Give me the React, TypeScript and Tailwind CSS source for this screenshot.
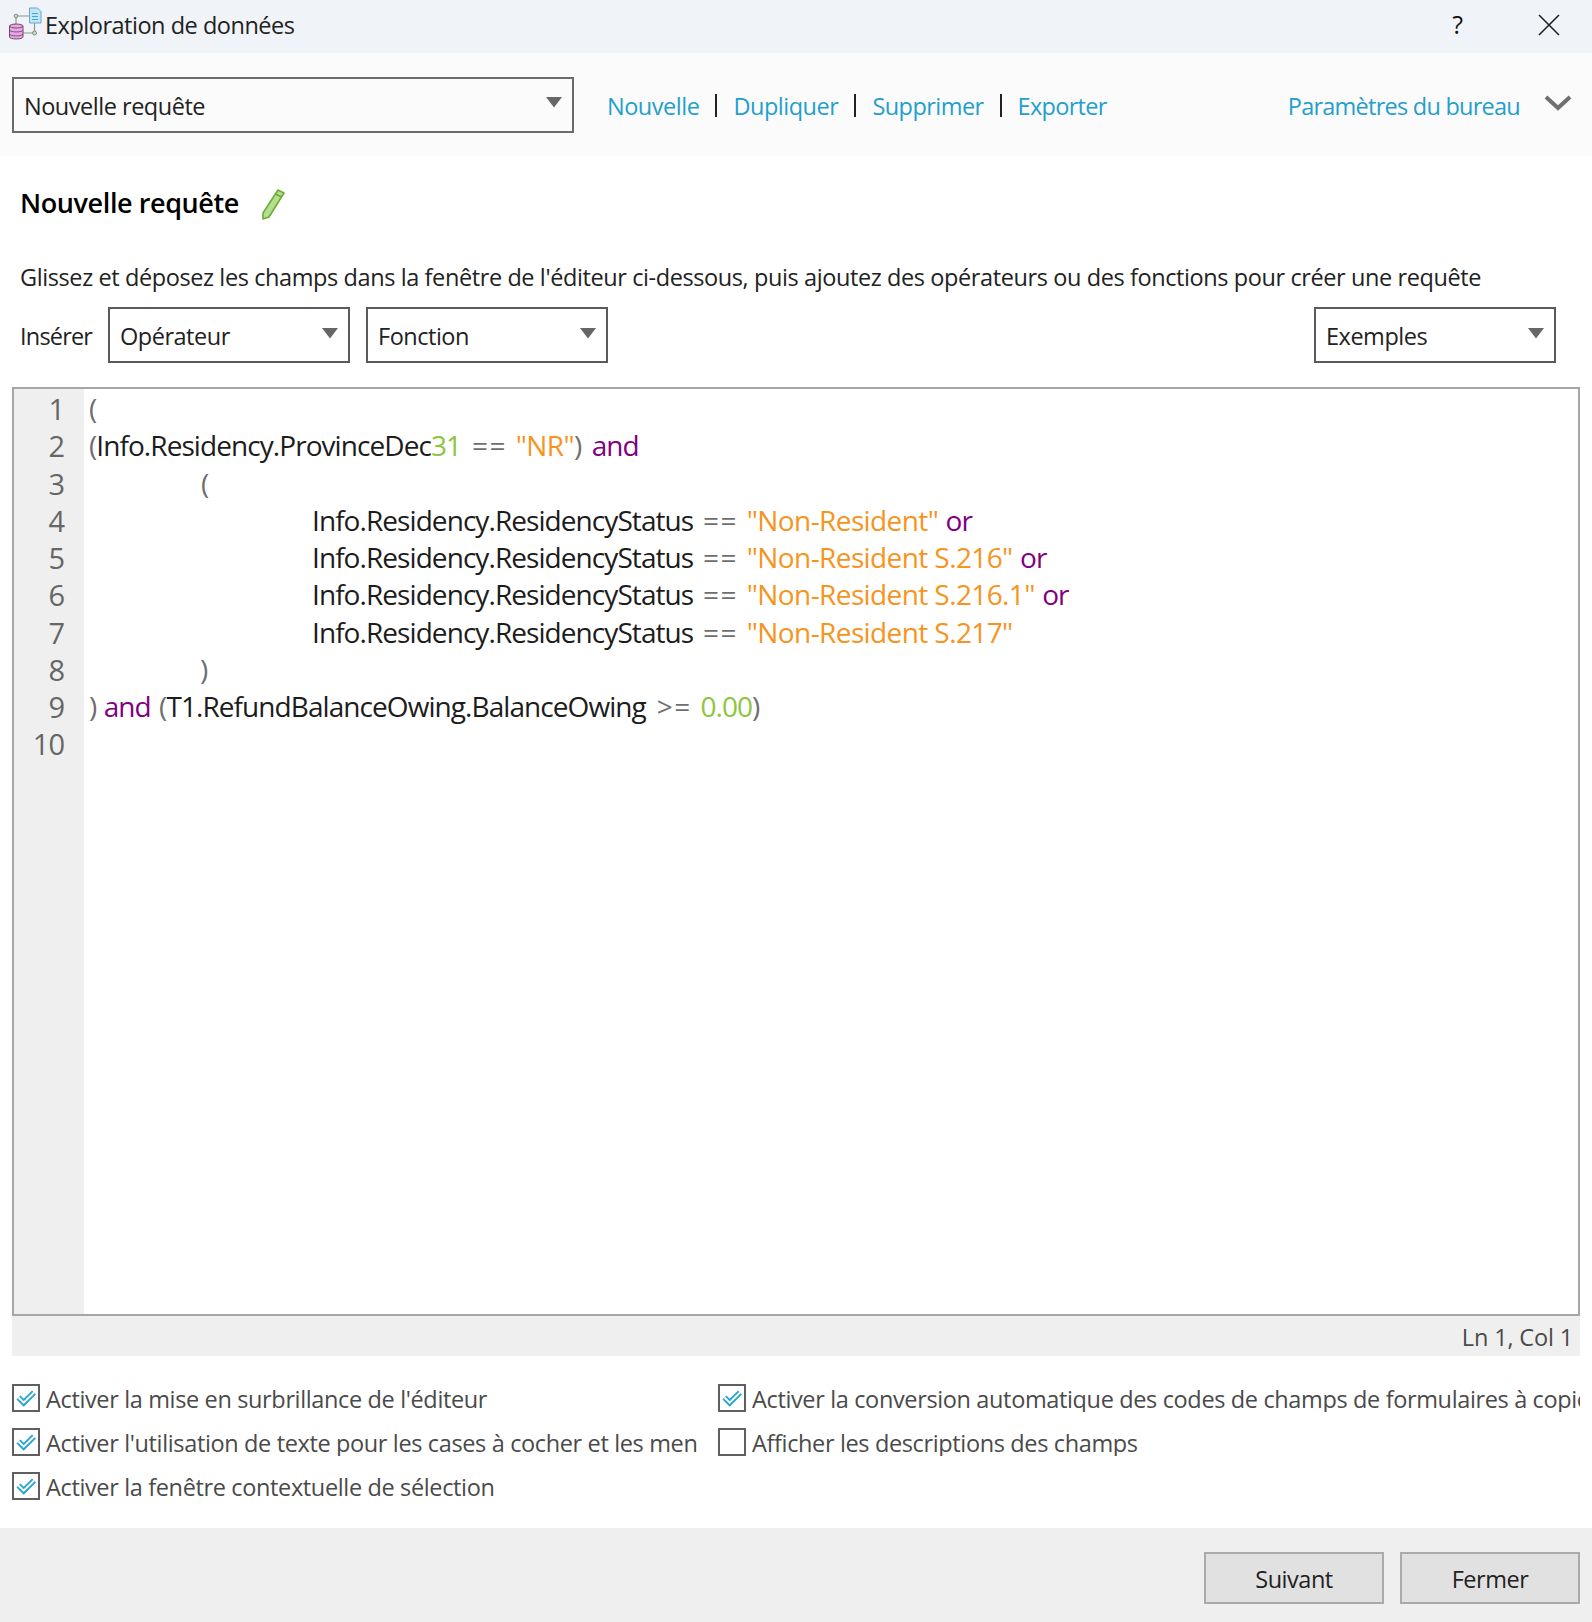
import React from "react";

const font = { fontFamily: '"Open Sans", "Noto Sans", sans-serif' };

const Caret = ({ className }: { className?: string }) => (
  <svg viewBox="0 0 16 11" className={className}>
    <path d="M0 0h16L8 10.5z" fill="#666" />
  </svg>
);

const Dropdown = ({ label, className }: { label: string; className: string }) => (
  <div className={`flex items-center justify-between border-2 border-[#5a5a5a] pl-[10px] pr-[10px] text-[23.5px] tracking-[-0.48px] text-[#222] ${className}`}>
    <span className="pt-[4px]">{label}</span>
    <Caret className="mb-[4px] w-[16px] h-[11px]" />
  </div>
);

const Checkbox = ({ label, checked = true, className }: { label: string; checked?: boolean; className?: string }) => (
  <div className={`flex items-center h-[28px] overflow-hidden whitespace-nowrap ${className ?? ""}`}>
    <div className="shrink-0 w-[28px] h-[28px] border-2 border-[#5f5f5f] bg-white">
      {checked && (
        <svg viewBox="0 0 24 24" className="w-[24px] h-[24px]">
          <path d="M4.5 11.5l5.2 5.2L20 6.5" fill="none" stroke="#22a5cf" strokeWidth="5.6" strokeLinejoin="miter" />
          <path d="M4.5 11.5l5.2 5.2L20 6.5" fill="none" stroke="#fff" strokeWidth="2" strokeLinejoin="miter" />
        </svg>
      )}
    </div>
    <span className="ml-[6px] pt-[4px] text-[23.5px] tracking-[-0.36px] text-[#4a4a4a]">{label}</span>
  </div>
);

const Sep = () => <span className="block mx-[16px] mt-[2px] w-[2px] h-[23px] bg-[#222]" />;
const Link = ({ children, className }: { children: React.ReactNode; className?: string }) => (
  <span className={`pt-[4px] text-[23.5px] text-[#249fcb] ${className ?? "tracking-[-0.48px]"}`}>{children}</span>
);

const G = ({ children }: { children: React.ReactNode }) => <span className="text-[#6e6e6e]">{children}</span>;
const S = ({ children }: { children: React.ReactNode }) => <span className="text-[#f7941d] tracking-[-0.6px]">{children}</span>;
const K = ({ children, className }: { children: React.ReactNode; className?: string }) => (
  <span className={`text-[#800080] ${className ?? ""}`}>{children}</span>
);
const N = ({ children }: { children: React.ReactNode }) => <span className="text-[#8cc63f]">{children}</span>;

const statusField = "Info.Residency.ResidencyStatus";
const statusLines = [
  { value: '"Non-Resident"', tail: " or" },
  { value: '"Non-Resident S.216"', tail: " or" },
  { value: '"Non-Resident S.216.1"', tail: " or" },
  { value: '"Non-Resident S.217"', tail: "" },
];

const Eq = ({ children = "==", className }: { children?: string; className?: string }) => (
  <span className={`text-[#6e6e6e] tracking-[1.5px] ${className ?? "ml-[1px]"}`}> {children} </span>
);

export default function App() {
  return (
    <div style={font} className="flex flex-col w-[1592px] h-[1622px] bg-white overflow-hidden">
      {/* title bar */}
      <div className="flex items-center h-[53px] shrink-0 bg-[#f0f3f8] pl-[8px] pb-[3px]">
        <svg viewBox="0 0 34 34" className="mb-[5px] w-[34px] h-[34px] shrink-0">
          <path d="M8 10h14M8 10v8M15 27h11.5M26.5 27V17" fill="none" stroke="#8a9a8a" strokeWidth="1.2" />
          <circle cx="8" cy="10" r="1.8" fill="#cfd8c8" stroke="#7f8f7f" />
          <circle cx="26.5" cy="27" r="2" fill="#cfd8c8" stroke="#7f8f7f" />
          <path d="M21.5 2h8l3.5 3.5V17H21.5z" fill="#bfe6f7" stroke="#6aa8c4" />
          <path d="M24 7.5h6M24 10.5h6M24 13.5h6" stroke="#3fa9d6" strokeWidth="1.2" />
          <path d="M1.5 20c0-2.6 13.5-2.6 13.5 0v11c0 2.6-13.5 2.6-13.5 0z" fill="#eba6e4" stroke="#6b4a6b" />
          <path d="M1.5 20c0 2.6 13.5 2.6 13.5 0M1.5 24c0 2.6 13.5 2.6 13.5 0M1.5 28c0 2.6 13.5 2.6 13.5 0" fill="none" stroke="#6b4a6b" strokeWidth="0.9" />
        </svg>
        <span className="ml-[3px] pt-[2px] text-[23.5px] tracking-[-0.48px] text-[#222]">Exploration de données</span>
        <span className="ml-auto text-[25px] text-[#111]">?</span>
        <svg viewBox="0 0 22 22" className="ml-[75px] mr-[32px] w-[22px] h-[22px]">
          <path d="M1 1l20 20M21 1L1 21" stroke="#222" strokeWidth="1.6" fill="none" />
        </svg>
      </div>

      {/* toolbar */}
      <div className="flex items-center h-[103px] shrink-0 bg-[#fbfbfb] pl-[12px]">
        <Dropdown label="Nouvelle requête" className="w-[562px] h-[56px] !border-[#6a6a6a]" />
        <div className="flex items-center ml-[33px]">
          <Link>Nouvelle</Link>
          <Sep />
          <Link>Dupliquer</Link>
          <Sep />
          <Link className="tracking-[-0.55px]">Supprimer</Link>
          <Sep />
          <Link className="tracking-[-0.7px]">Exporter</Link>
        </div>
        <Link className="ml-auto tracking-[-0.75px]">Paramètres du bureau</Link>
        <svg viewBox="0 0 28 16" className="ml-[24px] mr-[20px] mb-[3px] w-[28px] h-[16px]">
          <path d="M2 2l12 11L26 2" fill="none" stroke="#6f6f6f" strokeWidth="4" />
        </svg>
      </div>

      {/* heading */}
      <div className="flex items-center h-[94px] shrink-0 pl-[20px]">
        <span className="text-[27px] font-semibold tracking-[-0.4px] text-black">Nouvelle requête</span>
        <svg viewBox="0 0 24 32" className="ml-[22px] mt-[2px] w-[24px] h-[32px]">
          <path d="M17 2l6 3L8 29l-6 2 0-6z" fill="#b5de8f" stroke="#6aae35" strokeWidth="1.6" strokeLinejoin="round" />
          <path d="M14.5 6l6 3" stroke="#6aae35" strokeWidth="1.4" />
        </svg>
      </div>

      <div className="h-[57px] shrink-0 pl-[20px] pt-[10px] text-[23.5px] tracking-[-0.4px] text-[#222] whitespace-nowrap">
        Glissez et déposez les champs dans la fenêtre de l'éditeur ci-dessous, puis ajoutez des opérateurs ou des fonctions pour créer une requête
      </div>

      {/* insert row */}
      <div className="flex items-center h-[56px] shrink-0 pl-[20px] pr-[36px]">
        <span className="w-[88px] pt-[4px] text-[23.5px] tracking-[-0.8px] text-[#222]">Insérer</span>
        <Dropdown label="Opérateur" className="w-[242px] h-[56px]" />
        <Dropdown label="Fonction" className="ml-[16px] w-[242px] h-[56px]" />
        <Dropdown label="Exemples" className="ml-auto w-[242px] h-[56px]" />
      </div>

      {/* editor */}
      <div className="flex mx-[12px] mt-[24px] h-[929px] shrink-0 border-2 border-[#a6a6a6] overflow-hidden">
        <div className="w-[70px] shrink-0 bg-[#efefef] pt-[1px] pr-[20px] text-right text-[29px] leading-[37.25px] tracking-[-1px] text-[#666]">
          {[1, 2, 3, 4, 5, 6, 7, 8, 9, 10].map((n) => (
            <div key={n}>{n}</div>
          ))}
        </div>
        <div className="flex-1 pl-[5px] pt-[1px] text-[28px] leading-[37.25px] tracking-[-0.93px] text-[#1c1c1c] whitespace-pre">
          <div><G>(</G></div>
          <div><G>(</G>Info.Residency.ProvinceDec<N>31</N><Eq className="ml-[2px]" /><S>"NR"</S><G>)</G> <K className="ml-[4px]">and</K></div>
          <div className="pl-[112px]"><G>(</G></div>
          {statusLines.map((l) => (
            <div key={l.value} className="pl-[223px]">
              {statusField}
              <Eq />
              <S>{l.value}</S>
              <K className="ml-[1px]">{l.tail}</K>
            </div>
          ))}
          <div className="pl-[111px]"><G>)</G></div>
          <div><G>)</G> <K className="ml-[1px]">and</K> <span className="ml-[2px]"><G>(</G></span>T1.RefundBalanceOwing.BalanceOwing<Eq className="ml-[2px]">&gt;=</Eq><N>0.00</N><G>)</G></div>
        </div>
      </div>

      {/* status */}
      <div className="flex items-center justify-end mx-[12px] h-[40px] shrink-0 bg-[#efefef] pt-[3px] pr-[7px] text-[23.5px] tracking-[-0.15px] text-[#4a4a4a]">
        Ln 1, Col 1
      </div>

      {/* options */}
      <div className="grid grid-cols-[706px_862px] gap-y-[16px] mx-[12px] mt-[28px] h-[144px] shrink-0 content-start">
        <Checkbox label="Activer la mise en surbrillance de l'éditeur" />
        <Checkbox label="Activer la conversion automatique des codes de champs de formulaires à copier" />
        <Checkbox label="Activer l'utilisation de texte pour les cases à cocher et les men" />
        <Checkbox label="Afficher les descriptions des champs" checked={false} />
        <Checkbox label="Activer la fenêtre contextuelle de sélection" />
      </div>

      {/* footer */}
      <div className="flex flex-1 items-start justify-end gap-[16px] bg-[#efefef] pt-[24px] pr-[12px]">
        <button className="w-[180px] h-[52px] pt-[4px] border-2 border-[#aaaaaa] bg-[#e1e1e1] text-[23.5px] tracking-[-0.48px] text-[#222]">Suivant</button>
        <button className="w-[180px] h-[52px] pt-[4px] border-2 border-[#aaaaaa] bg-[#e1e1e1] text-[23.5px] tracking-[-0.48px] text-[#222]">Fermer</button>
      </div>
    </div>
  );
}
